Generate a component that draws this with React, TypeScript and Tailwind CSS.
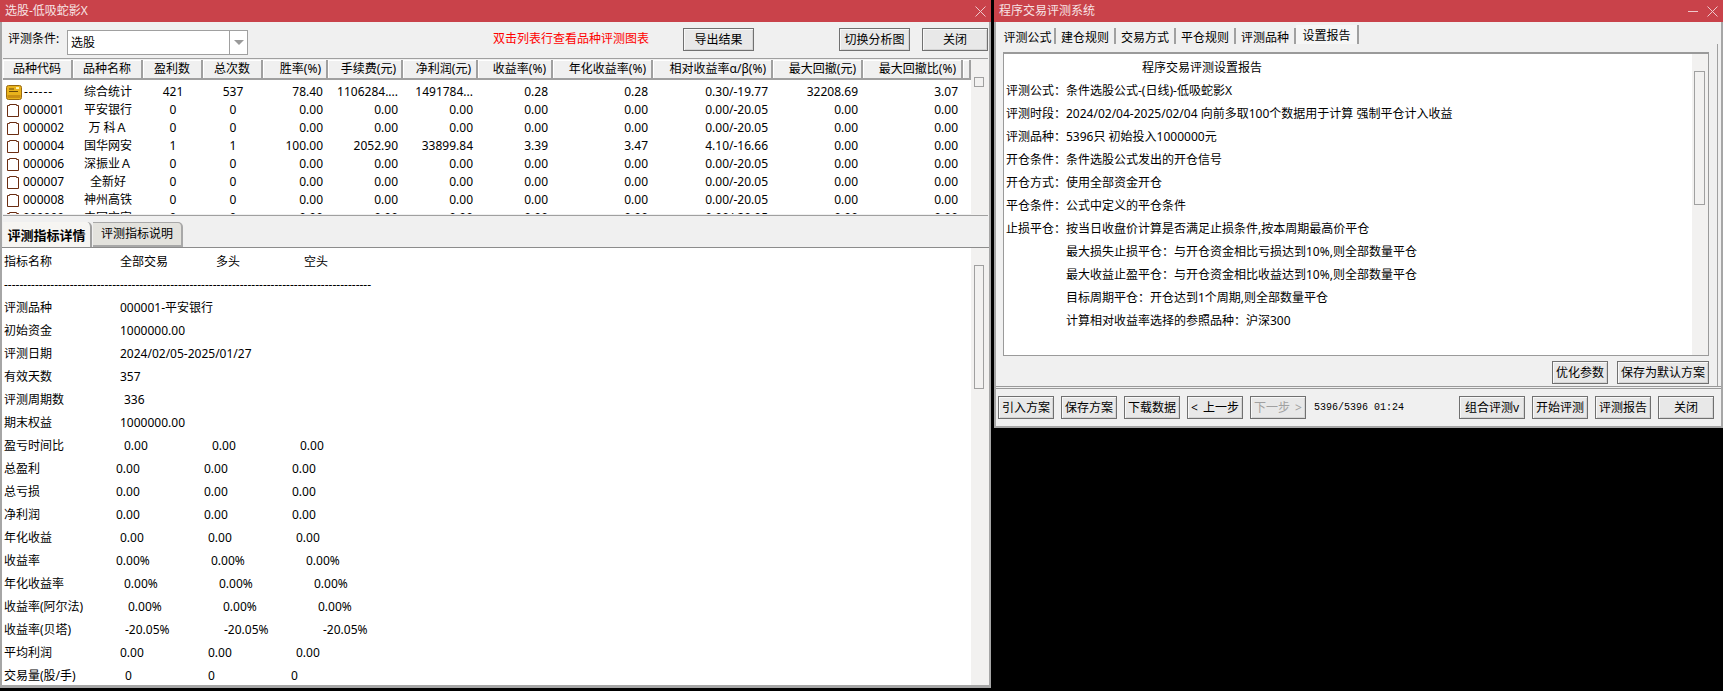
import React from "react";

const cols = [
  { name: "品种代码", w: "w-[70px]", align: "justify-center" },
  { name: "品种名称", w: "w-[70px]", align: "justify-center" },
  { name: "盈利数", w: "w-[60px]", align: "justify-center" },
  { name: "总次数", w: "w-[60px]", align: "justify-center" },
  { name: "胜率(%)", w: "w-[65px]", align: "justify-end pr-[5px]" },
  { name: "手续费(元)", w: "w-[75px]", align: "justify-end pr-[5px]" },
  { name: "净利润(元)", w: "w-[75px]", align: "justify-end pr-[5px]" },
  { name: "收益率(%)", w: "w-[75px]", align: "justify-end pr-[5px]" },
  { name: "年化收益率(%)", w: "w-[100px]", align: "justify-end pr-[5px]" },
  { name: "相对收益率α/β(%)", w: "w-[120px]", align: "justify-end pr-[5px]" },
  { name: "最大回撤(元)", w: "w-[90px]", align: "justify-end pr-[5px]" },
  { name: "最大回撤比(%)", w: "w-[100px]", align: "justify-end pr-[5px]" },
  { name: "", w: "w-[8px]", align: "" },
];

const rows = [
  ["------", "综合统计", "421", "537", "78.40", "1106284....", "1491784...", "0.28", "0.28", "0.30/-19.77", "32208.69", "3.07"],
  ["000001", "平安银行", "0", "0", "0.00", "0.00", "0.00", "0.00", "0.00", "0.00/-20.05", "0.00", "0.00"],
  ["000002", "万 科Ａ", "0", "0", "0.00", "0.00", "0.00", "0.00", "0.00", "0.00/-20.05", "0.00", "0.00"],
  ["000004", "国华网安", "1", "1", "100.00", "2052.90", "33899.84", "3.39", "3.47", "4.10/-16.66", "0.00", "0.00"],
  ["000006", "深振业Ａ", "0", "0", "0.00", "0.00", "0.00", "0.00", "0.00", "0.00/-20.05", "0.00", "0.00"],
  ["000007", "全新好", "0", "0", "0.00", "0.00", "0.00", "0.00", "0.00", "0.00/-20.05", "0.00", "0.00"],
  ["000008", "神州高铁", "0", "0", "0.00", "0.00", "0.00", "0.00", "0.00", "0.00/-20.05", "0.00", "0.00"],
  ["000009", "中国宝安", "0", "0", "0.00", "0.00", "0.00", "0.00", "0.00", "0.00/-20.05", "0.00", "0.00"],
];

const details = [
  { g: "grid-cols-[116px_96px_88px_1fr]", v: ["指标名称", "全部交易", "多头", "空头"] },
  { g: "grid-cols-[1fr]", v: ["-".repeat(95)] },
  { g: "grid-cols-[116px_1fr]", v: ["评测品种", "000001-平安银行"] },
  { g: "grid-cols-[116px_1fr]", v: ["初始资金", "1000000.00"] },
  { g: "grid-cols-[116px_1fr]", v: ["评测日期", "2024/02/05-2025/01/27"] },
  { g: "grid-cols-[116px_1fr]", v: ["有效天数", "357"] },
  { g: "grid-cols-[120px_1fr]", v: ["评测周期数", "336"] },
  { g: "grid-cols-[116px_1fr]", v: ["期末权益", "1000000.00"] },
  { g: "grid-cols-[120px_88px_88px_1fr]", v: ["盈亏时间比", "0.00", "0.00", "0.00"] },
  { g: "grid-cols-[112px_88px_88px_1fr]", v: ["总盈利", "0.00", "0.00", "0.00"] },
  { g: "grid-cols-[112px_88px_88px_1fr]", v: ["总亏损", "0.00", "0.00", "0.00"] },
  { g: "grid-cols-[112px_88px_88px_1fr]", v: ["净利润", "0.00", "0.00", "0.00"] },
  { g: "grid-cols-[116px_88px_88px_1fr]", v: ["年化收益", "0.00", "0.00", "0.00"] },
  { g: "grid-cols-[112px_95px_95px_1fr]", v: ["收益率", "0.00%", "0.00%", "0.00%"] },
  { g: "grid-cols-[120px_95px_95px_1fr]", v: ["年化收益率", "0.00%", "0.00%", "0.00%"] },
  { g: "grid-cols-[124px_95px_95px_1fr]", v: ["收益率(阿尔法)", "0.00%", "0.00%", "0.00%"] },
  { g: "grid-cols-[121px_99px_99px_1fr]", v: ["收益率(贝塔)", "-20.05%", "-20.05%", "-20.05%"] },
  { g: "grid-cols-[116px_88px_88px_1fr]", v: ["平均利润", "0.00", "0.00", "0.00"] },
  { g: "grid-cols-[121px_83px_83px_1fr]", v: ["交易量(股/手)", "0", "0", "0"] },
];

const report = [
  { t: "程序交易评测设置报告", c: "pl-[136px]" },
  { t: "评测公式：条件选股公式-(日线)-低吸蛇影X", c: "" },
  { t: "评测时段：2024/02/04-2025/02/04 向前多取100个数据用于计算 强制平仓计入收益", c: "" },
  { t: "评测品种：5396只 初始投入1000000元", c: "" },
  { t: "开仓条件：条件选股公式发出的开仓信号", c: "" },
  { t: "开仓方式：使用全部资金开仓", c: "" },
  { t: "平仓条件：公式中定义的平仓条件", c: "" },
  { t: "止损平仓：按当日收盘价计算是否满足止损条件,按本周期最高价平仓", c: "" },
  { t: "最大损失止损平仓：与开仓资金相比亏损达到10%,则全部数量平仓", c: "pl-[60px]" },
  { t: "最大收益止盈平仓：与开仓资金相比收益达到10%,则全部数量平仓", c: "pl-[60px]" },
  { t: "目标周期平仓：开仓达到1个周期,则全部数量平仓", c: "pl-[60px]" },
  { t: "计算相对收益率选择的参照品种：沪深300", c: "pl-[60px]" },
];

const rightTabs = [
  { t: "评测公式", w: "w-[55px]" },
  { t: "建仓规则", w: "w-[60px]" },
  { t: "交易方式", w: "w-[60px]" },
  { t: "平仓规则", w: "w-[60px]" },
  { t: "评测品种", w: "w-[60px]" },
];

const CloseIcon = () => (
  <svg width="11" height="11" viewBox="0 0 11 11" fill="none" stroke="#eec9cc" strokeWidth="1">
    <path d="M0.5 0.5L10.5 10.5M10.5 0.5L0.5 10.5" />
  </svg>
);

const PaperIcon = () => (
  <svg width="12" height="13" viewBox="0 0 12 13" className="ml-[4px] mr-[4px] shrink-0">
    <path d="M0.5 1.5H2.5V0.5H9.5V1.5H11.5V12.5H0.5Z" fill="#fff" stroke="#6a2c10" />
  </svg>
);

const FolderIcon = () => (
  <svg width="16" height="15" viewBox="0 0 16 15" className="ml-[3px] mr-[2px] shrink-0">
    <rect x="0.5" y="0.5" width="15" height="14" rx="2" fill="#e9b31c" stroke="#9a6a10" />
    <path d="M3 4H8M3 6.5H12" stroke="#6b4a08" />
    <path d="M10 2H13V4H10Z" fill="#fff2b0" />
    <path d="M1.5 10H14.5V13H1.5Z" fill="#c98f12" />
  </svg>
);

const Btn = ({ children, className = "" }: { children: React.ReactNode; className?: string }) => (
  <div
    className={`flex items-center justify-center border border-[#707070] bg-[#e8e8e8] shadow-[inset_1px_1px_0_#f8f8f8,inset_-1px_-1px_0_#d4d4d4] ${className}`}
  >
    {children}
  </div>
);

export default function App() {
  return (
    <div className="flex h-[691px] w-[1723px] items-start overflow-hidden bg-black font-['Noto_Sans','Noto_Sans_CJK_SC',sans-serif] text-[12px] leading-[18px] text-black">
      {/* left window */}
      <div className="flex h-[688px] w-[991px] flex-col">
        <div className="flex h-[22px] shrink-0 items-center justify-between bg-[#c9424a] pl-[5px] pr-[5px] text-[#f7e3e4]">
          <span>选股-低吸蛇影X</span>
          <CloseIcon />
        </div>
        <div className="flex min-h-0 flex-1 flex-col border-x-2 border-b-[3px] border-[#a6a6a6] bg-[#f0f0f0]">
          <div className="mx-px flex h-[37px] shrink-0 items-start border-b border-[#a0a0a0]">
            <span className="ml-[5px] mt-[8px] w-[59px]">评测条件:</span>
            <div className="mt-[8px] flex h-[25px] w-[181px] border border-[#a0a0a0] bg-white">
              <span className="flex flex-1 items-center pl-[3px]">选股</span>
              <div className="flex w-[18px] items-center justify-center border-l border-[#a0a0a0]">
                <div className="h-0 w-0 border-x-[5px] border-t-[5px] border-x-transparent border-t-[#9a9a9a]" />
              </div>
            </div>
            <span className="ml-[245px] mt-[8px] text-[#ff0000]">双击列表行查看品种评测图表</span>
            <Btn className="ml-[34px] mt-[6px] h-[23px] w-[71px]">导出结果</Btn>
            <Btn className="ml-[85px] mt-[6px] h-[23px] w-[71px]">切换分析图</Btn>
            <Btn className="ml-[12px] mt-[6px] h-[23px] w-[66px]">关闭</Btn>
          </div>

          {/* stock list */}
          <div className="ml-px mt-px flex h-[155px] shrink-0">
            <div className="flex w-[968px] flex-col">
              <div className="flex h-[20px] shrink-0">
                {cols.map((c, i) => (
                  <div
                    key={i}
                    className={`flex ${c.w} ${c.align} items-center border-b-2 border-r-2 border-[#a0a0a0] bg-[#f0f0f0] shadow-[inset_1px_1px_0_#ffffff]`}
                  >
                    {c.name}
                  </div>
                ))}
              </div>
              <div className="h-[134px] overflow-hidden bg-white pt-[3px]">
                {rows.map((r, i) => (
                  <div key={i} className="flex h-[18px] items-center">
                    {r.map((v, j) => (
                      <div key={j} className={`flex ${cols[j].w} ${j > 3 ? "justify-end pr-[5px]" : j > 0 ? "justify-center" : ""} items-center whitespace-nowrap`}>
                        {j === 0 && (i === 0 ? <FolderIcon /> : <PaperIcon />)}
                        {i === 0 && j === 0 ? <span className="tracking-[1px]">{v}</span> : v}
                      </div>
                    ))}
                  </div>
                ))}
              </div>
            </div>
            <div className="w-[18px] bg-[#f2f1f0] pl-[3px] pt-[17px]">
              <div className="h-[10px] w-[10px] border border-[#a0a0a0]" />
            </div>
          </div>
          <div className="mx-px h-px shrink-0 bg-[#a0a0a0]" />

          {/* tabs */}
          <div className="ml-px mt-[6px] flex h-[25px] shrink-0 items-stretch border-[#a0a0a0]">
            <div className="flex w-[89px] items-center justify-center rounded-tr-[5px] border-r-2 border-[#a0a0a0] bg-[#f6f5f2] text-[13px] font-bold">
              评测指标详情
            </div>
            <div className="ml-px flex w-[90px] items-center justify-center rounded-tr-[5px] border-r-2 border-t border-b-2 border-[#a8a8a8] bg-[#e3e2dd]">
              评测指标说明
            </div>
          </div>
          <div className="h-px shrink-0 bg-[#8c8c8c]" />

          {/* detail text */}
          <div className="flex min-h-0 flex-1">
            <div className="flex-1 overflow-hidden bg-white pl-[2px] pt-[2px]">
              {details.map((d, i) => (
                <div key={i} className={`grid h-[23px] items-center whitespace-nowrap ${d.g}`}>
                  {d.v.map((v, j) => (
                    <span key={j}>{v}</span>
                  ))}
                </div>
              ))}
            </div>
            <div className="w-[18px] bg-[#f2f1f0] pl-[3px] pt-[17px]">
              <div className="h-[124px] w-[10px] border border-[#a0a0a0]" />
            </div>
          </div>
        </div>
      </div>

      {/* right window */}
      <div className="ml-[3px] flex h-[428px] w-[729px] flex-col">
        <div className="flex h-[22px] shrink-0 items-center justify-between bg-[#c9424a] pl-[5px] pr-[5px] text-[#f7e3e4]">
          <span>程序交易评测系统</span>
          <div className="flex items-center gap-[9px]">
            <div className="h-px w-[10px] bg-[#eec9cc]" />
            <CloseIcon />
          </div>
        </div>
        <div className="flex min-h-0 flex-1 flex-col border-x-2 border-b-2 border-[#a6a6a6] bg-[#f0f0f0]">
          <div className="flex h-[367px] shrink-0 flex-col border-b-[3px] border-double border-[#9a9a9a]">
            <div className="ml-[5px] mt-[3px] flex h-[19px] shrink-0 items-end">
              {rightTabs.map((t) => (
                <div key={t.t} className={`flex h-[16px] ${t.w} items-center justify-center border-r-2 border-[#a0a0a0] pt-[3px]`}>
                  {t.t}
                </div>
              ))}
              <div className="flex h-[19px] w-[63px] items-start justify-center border-r-2 border-[#a0a0a0] bg-[#f6f6f6] pt-[2px]">
                设置报告
              </div>
            </div>
            <div className="mr-[3px] flex min-h-0 flex-1 flex-col border-r border-[#a0a0a0] pl-[7px] pt-[8px]">
              <div className="flex h-[304px] w-[706px] shrink-0 border border-t-2 border-[#9a9a9a] bg-white">
                <div className="flex-1 pl-[2px] pt-[2px]">
                  {report.map((r) => (
                    <div key={r.t} className={`flex h-[23px] items-center whitespace-nowrap ${r.c}`}>
                      {r.t}
                    </div>
                  ))}
                </div>
                <div className="w-[16px] bg-[#f2f1f0] pl-[2px] pt-[17px]">
                  <div className="h-[134px] w-[11px] border border-[#a0a0a0]" />
                </div>
              </div>
              <div className="mt-[5px] flex w-[706px] justify-end gap-[9px]">
                <Btn className="h-[23px] w-[56px]">优化参数</Btn>
                <Btn className="h-[23px] w-[92px]">保存为默认方案</Btn>
              </div>
            </div>
          </div>
          <div className="ml-[2px] mr-[7px] mt-[7px] flex h-[23px] items-center">
            <Btn className="h-[23px] w-[56px]">引入方案</Btn>
            <Btn className="ml-[7px] h-[23px] w-[56px]">保存方案</Btn>
            <Btn className="ml-[7px] h-[23px] w-[56px]">下载数据</Btn>
            <Btn className="ml-[7px] h-[23px] w-[56px]">
              <span className="mr-[5px]">&lt;</span>上一步
            </Btn>
            <Btn className="ml-[7px] h-[23px] w-[56px] text-[#a0a0a0]">
              下一步<span className="ml-[5px]">&gt;</span>
            </Btn>
            <span className="ml-[8px] font-['Liberation_Mono',monospace] text-[10px]">5396/5396 01:24</span>
            <Btn className="ml-auto h-[23px] w-[66px]">组合评测v</Btn>
            <Btn className="ml-[7px] h-[23px] w-[56px]">开始评测</Btn>
            <Btn className="ml-[7px] h-[23px] w-[56px]">评测报告</Btn>
            <Btn className="ml-[7px] h-[23px] w-[56px]">关闭</Btn>
          </div>
        </div>
      </div>
    </div>
  );
}
